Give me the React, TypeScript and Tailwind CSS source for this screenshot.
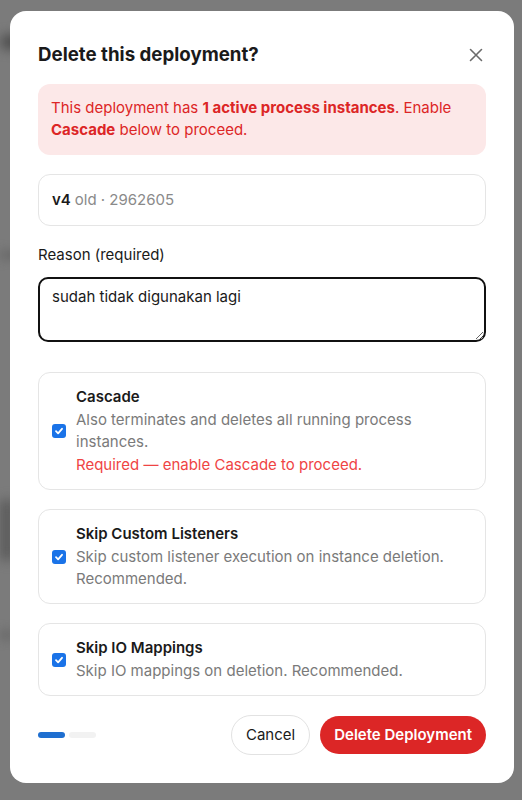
import React from "react";

function Check() {
  return (
    <span className="flex h-[14px] w-[14px] shrink-0 items-center justify-center rounded-[3px] bg-[#1a73e8]">
      <svg width="10" height="10" viewBox="0 0 10 10" fill="none">
        <path d="M2 5.2 L4.1 7.3 L8 2.8" stroke="white" strokeWidth="1.8" strokeLinecap="round" strokeLinejoin="round" />
      </svg>
    </span>
  );
}

function OptionCard({ title, children }: { title: string; children: React.ReactNode }) {
  return (
    <div className="flex items-center gap-[10px] rounded-[12px] border border-[#e5e5e5] px-[13px] py-[13px]">
      <Check />
      <div className="flex flex-col">
        <div className="text-[15px] font-semibold leading-[22px] text-[#1a1a1a]">{title}</div>
        <div className="mt-[1px]">{children}</div>
      </div>
    </div>
  );
}

export default function App() {
  return (
    <div
      className="relative h-[800px] w-[522px] overflow-hidden bg-[#7b7b7b]"
      style={{ fontFamily: "Inter, 'Noto Sans', sans-serif" }}
    >
      <div className="absolute left-0 top-[35px] h-[14px] w-[30px] rounded-full bg-[#4a4a4a] blur-[6px]" />
      <div className="absolute left-0 top-[250px] h-[10px] w-[20px] bg-[#6a6a6a] blur-[5px]" />
      <div className="absolute left-0 top-[500px] h-[60px] w-[14px] bg-[#5a5a5a] blur-[6px]" />
      <div className="absolute left-0 top-[630px] h-[10px] w-[14px] bg-[#6a6a6a] blur-[5px]" />

      <div className="absolute left-[10px] top-[11px] flex h-[772px] w-[504px] flex-col rounded-[16px] bg-white px-[28px] pt-[30px]">
        <div className="flex items-center justify-between">
          <h2 className="text-[18.7px] font-bold leading-[28px] text-[#1a1a1a]">Delete this deployment?</h2>
          <svg width="14" height="14" viewBox="0 0 14 14" className="mr-[3px]">
            <path d="M1.5 1.5 L12.5 12.5 M12.5 1.5 L1.5 12.5" stroke="#6b6b6b" strokeWidth="1.6" strokeLinecap="round" />
          </svg>
        </div>

        <div className="mt-[15px] rounded-[12px] bg-[#fce8e8] px-[13px] pb-[14px] pt-[13px] text-[15px] leading-[22px] text-[#dc2626]">
          This deployment has <span className="font-bold">1 active process instances</span>. Enable{" "}
          <span className="font-bold">Cascade</span> below to proceed.
        </div>

        <div className="mt-[19px] flex h-[52px] items-center rounded-[12px] border border-[#e5e5e5] px-[13px] text-[15px]">
          <span className="font-semibold text-[#1a1a1a]">v4</span>
          <span className="ml-[4px] text-[#8a8a8a]">old · 2962605</span>
        </div>

        <label className="mt-[18px] text-[15px] leading-[22px] text-[#1a1a1a]">Reason (required)</label>
        <textarea
          className="mt-[11px] h-[65px] w-full resize-y rounded-[10px] border-2 border-[#111] px-[12px] py-[7px] text-[15px] leading-[22px] text-[#1a1a1a] outline-none"
          defaultValue="sudah tidak digunakan lagi"
        />

        <div className="mt-[30px] flex flex-col gap-[19px]">
          <OptionCard title="Cascade">
            <div className="text-[15px] leading-[22px] text-[#7a7a7a]">
              Also terminates and deletes all running process instances.
            </div>
            <div className="mt-[1px] text-[15px] leading-[22px] text-[#ef4444]">Required — enable Cascade to proceed.</div>
          </OptionCard>
          <OptionCard title="Skip Custom Listeners">
            <div className="text-[15px] leading-[22px] text-[#7a7a7a]">
              Skip custom listener execution on instance deletion. Recommended.
            </div>
          </OptionCard>
          <OptionCard title="Skip IO Mappings">
            <div className="text-[15px] leading-[22px] text-[#7a7a7a]">Skip IO mappings on deletion. Recommended.</div>
          </OptionCard>
        </div>

        <div className="mt-[19px] flex items-center justify-between">
          <div className="flex gap-[4px]">
            <span className="h-[6px] w-[27px] rounded-full bg-[#1f6fd0]" />
            <span className="h-[6px] w-[27px] rounded-full bg-[#f2f2f2]" />
          </div>
          <div className="flex items-center gap-[10px]">
            <button className="h-[40px] rounded-full border border-[#e2e2e2] bg-white px-[14px] text-[15px] text-[#1a1a1a]">
              Cancel
            </button>
            <button className="h-[38px] rounded-full bg-[#dc2626] px-[14px] text-[15px] font-semibold text-white">
              Delete Deployment
            </button>
          </div>
        </div>
      </div>
    </div>
  );
}
